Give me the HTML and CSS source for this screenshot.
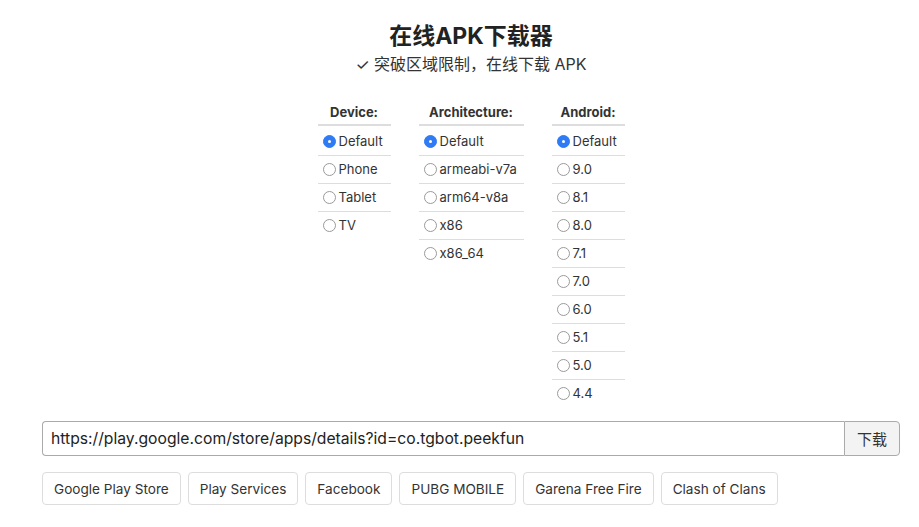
FILE: index.html
```html
<!DOCTYPE html>
<html lang="zh">
<head>
<meta charset="utf-8">
<title>在线APK下载器</title>
<link rel="stylesheet" href="styles.css">
</head>
<body>
<div class="wrap">
  <h1 class="title">在线APK下载器</h1>
  <p class="subtitle">✓ 突破区域限制，在线下载 APK</p>

  <div class="options">
    <table class="opt w-device">
      <thead><tr><th>Device:</th></tr></thead>
      <tbody>
        <tr><td><span class="radio on"></span>Default</td></tr>
        <tr><td><span class="radio"></span>Phone</td></tr>
        <tr><td><span class="radio"></span>Tablet</td></tr>
        <tr><td><span class="radio"></span>TV</td></tr>
      </tbody>
    </table>
    <table class="opt w-arch">
      <thead><tr><th>Architecture:</th></tr></thead>
      <tbody>
        <tr><td><span class="radio on"></span>Default</td></tr>
        <tr><td><span class="radio"></span>armeabi-v7a</td></tr>
        <tr><td><span class="radio"></span>arm64-v8a</td></tr>
        <tr><td><span class="radio"></span>x86</td></tr>
        <tr><td><span class="radio"></span>x86_64</td></tr>
      </tbody>
    </table>
    <table class="opt w-android">
      <thead><tr><th>Android:</th></tr></thead>
      <tbody>
        <tr><td><span class="radio on"></span>Default</td></tr>
        <tr><td><span class="radio"></span>9.0</td></tr>
        <tr><td><span class="radio"></span>8.1</td></tr>
        <tr><td><span class="radio"></span>8.0</td></tr>
        <tr><td><span class="radio"></span>7.1</td></tr>
        <tr><td><span class="radio"></span>7.0</td></tr>
        <tr><td><span class="radio"></span>6.0</td></tr>
        <tr><td><span class="radio"></span>5.1</td></tr>
        <tr><td><span class="radio"></span>5.0</td></tr>
        <tr><td><span class="radio"></span>4.4</td></tr>
      </tbody>
    </table>
  </div>

  <div class="search">
    <input class="url" type="text" value="https://play.google.com/store/apps/details?id=co.tgbot.peekfun">
    <button class="go" type="button">下载</button>
  </div>

  <div class="quick">
    <button class="chip" type="button">Google Play Store</button>
    <button class="chip" type="button">Play Services</button>
    <button class="chip" type="button">Facebook</button>
    <button class="chip" type="button">PUBG MOBILE</button>
    <button class="chip" type="button">Garena Free Fire</button>
    <button class="chip" type="button">Clash of Clans</button>
  </div>
</div>
</body>
</html>
```

FILE: styles.css
```css
* { box-sizing: border-box; }
html, body { margin: 0; padding: 0; background: #fff; }
body {
  font-family: Inter, "Noto Sans CJK SC", "Noto Sans", sans-serif;
  color: #333;
}
.wrap {
  width: 858px;
  margin-left: 42px;
  padding-top: 21px;
}
.title {
  margin: 0;
  text-align: center;
  font-size: 23px;
  line-height: 30px;
  font-weight: 700;
  color: #222;
}
.subtitle {
  margin: 2px 0 0;
  text-align: center;
  font-size: 16px;
  line-height: 22px;
  color: #333;
}
.options {
  display: flex;
  justify-content: center;
  align-items: flex-start;
  gap: 28px;
  margin-top: 25px;
}
.opt {
  border-collapse: collapse;
  font-size: 13px;
}
.w-device, .w-android { width: 73px; }
.w-arch { width: 105px; }
.opt th {
  text-align: center;
  font-weight: 700;
  line-height: 16px;
  padding: 4px 5px;
  border-bottom: 2px solid #ddd;
  color: #333;
}
.opt td {
  padding: 5px 5px;
  line-height: 17px;
  border-top: 1px solid #ddd;
  white-space: nowrap;
  color: #333;
}
.opt tbody tr:first-child td { border-top: 0; padding-top: 7px; padding-bottom: 5px; }
.radio {
  display: inline-block;
  width: 13px;
  height: 13px;
  border: 1px solid #9a9a9a;
  border-radius: 50%;
  vertical-align: -2px;
  margin-right: 3px;
  background: #fff;
  position: relative;
}
.radio.on {
  border-color: #2f7bf5;
  background: #2f7bf5;
}
.radio.on::after {
  content: "";
  position: absolute;
  left: 4px;
  top: 4px;
  width: 3px;
  height: 3px;
  border-radius: 50%;
  background: #fff;
}
.search {
  display: flex;
  margin-top: 14px;
  height: 35px;
}
.url {
  flex: 1;
  min-width: 0;
  height: 35px;
  border: 1px solid #aaa;
  border-right: 0;
  border-radius: 4px 0 0 4px;
  padding: 0 8px;
  font-family: Inter, "Noto Sans CJK SC", sans-serif;
  font-size: 15.7px;
  color: #222;
  outline: none;
}
.go {
  width: 56px;
  height: 35px;
  border: 1px solid #aaa;
  border-radius: 0 4px 4px 0;
  background: #f3f3f3;
  font-family: "Noto Sans CJK SC", sans-serif;
  font-size: 15px;
  color: #333;
  padding: 0;
}
.quick {
  display: flex;
  gap: 7px;
  margin-top: 16px;
}
.chip {
  height: 33px;
  padding: 0 11px;
  border: 1px solid #ddd;
  border-radius: 4px;
  background: #fff;
  font-family: Inter, "Noto Sans", sans-serif;
  font-size: 13.6px;
  color: #333;
}
```
